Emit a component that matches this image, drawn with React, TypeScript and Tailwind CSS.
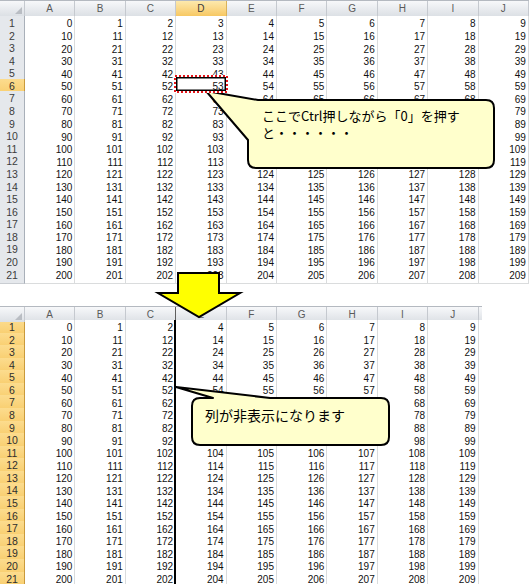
import React from 'react';

const ROWS = Array.from({ length: 21 }, (_, i) => i);
const TOP_COLS = ['A', 'B', 'C', 'D', 'E', 'F', 'G', 'H', 'I', 'J'];
const BOTTOM_COLS: { label: string; off: number | null }[] = [
  { label: 'A', off: 0 },
  { label: 'B', off: 1 },
  { label: 'C', off: 2 },
  { label: 'E', off: 4 },
  { label: 'F', off: 5 },
  { label: 'G', off: 6 },
  { label: 'H', off: 7 },
  { label: 'I', off: 8 },
  { label: 'J', off: 9 },
  { label: '', off: null },
];

const colHead =
  "flex items-center justify-center border-r border-[#c5c9cf] bg-linear-to-b from-[#f7f8fa] to-[#dce0e5] text-[10px] text-[#5a5a5a]";
const colHeadSel =
  "flex items-center justify-center border-r border-[#d9b25a] bg-linear-to-b from-[#fde9ac] to-[#f7c862] text-[10px] text-[#3a3a3a]";
const rowHead =
  "flex items-center justify-center border-r border-b border-r-[#a9b0b9] border-b-[#c9cdd2] bg-[#e5e8ec] text-[10.5px] text-[#3c3c3c]";
const rowHeadSel =
  "flex items-center justify-center border-r border-b border-r-[#c99a3c] border-b-[#eab95a] bg-linear-to-b from-[#fcdc8e] to-[#f8cd6c] text-[10.5px] text-[#2e2e2e]";
const cell =
  "flex items-center justify-end pr-[2px] border-r border-b border-[#dadcdd] bg-white text-[10px] text-[#111]";

function Corner() {
  return (
    <div className="relative border-r border-[#c5c9cf] bg-linear-to-b from-[#f7f8fa] to-[#dce0e5]">
      <div className="absolute right-[2px] bottom-[2px] h-0 w-0 border-l-[7px] border-b-[7px] border-l-transparent border-b-[#b9bdc3]" />
    </div>
  );
}

function Selection() {
  return (
    <svg
      className="pointer-events-none absolute -left-[2px] -top-[4px] z-10"
      width="54"
      height="18"
      viewBox="0 0 54 18"
    >
      <rect x="1" y="1" width="52" height="16" fill="none" stroke="#ffffff" strokeWidth="2" />
      <rect
        x="1"
        y="1"
        width="52"
        height="16"
        fill="none"
        stroke="#e3161b"
        strokeWidth="2"
        strokeDasharray="2 2"
      />
      <rect x="2.75" y="2.75" width="48.5" height="12.5" fill="none" stroke="#000" strokeWidth="1.5" />
    </svg>
  );
}

function TopSheet() {
  return (
    <div className="w-[529px] border-t border-[#b4b9c0] font-['Liberation_Sans',Arial,sans-serif]">
      <div className="grid h-[15px] grid-cols-[25px_repeat(10,50.4px)] border-b border-[#b3b9c1]">
        <Corner />
        {TOP_COLS.map((c) => (
          <div key={c} className={c === 'D' ? colHeadSel : colHead}>
            {c}
          </div>
        ))}
      </div>
      {ROWS.map((r) => (
        <div key={r} className="grid h-[12.58px] grid-cols-[25px_repeat(10,50.4px)]">
          <div className={r === 5 ? rowHeadSel : rowHead}>{r + 1}</div>
          {TOP_COLS.map((c, i) => {
            const hidden = r >= 7 && r <= 11 && i >= 4 && i <= 8;
            return (
              <div key={c} className={cell + ' relative'}>
                <span className={hidden ? 'invisible' : ''}>{r * 10 + i}</span>
                {r === 5 && c === 'D' && <Selection />}
              </div>
            );
          })}
        </div>
      ))}
    </div>
  );
}

function BottomSheet() {
  return (
    <div className="relative mt-[25.8px] w-[482px] overflow-hidden border-t border-[#b4b9c0] font-['Liberation_Sans',Arial,sans-serif]">
      <div className="grid h-[13px] grid-cols-[25px_repeat(10,50.4px)] border-b border-[#b3b9c1]">
        <Corner />
        {BOTTOM_COLS.map((c, i) => (
          <div key={i} className={colHead}>
            {c.label}
          </div>
        ))}
      </div>
      {ROWS.map((r) => (
        <div key={r} className="grid h-[12.58px] grid-cols-[25px_repeat(10,50.4px)]">
          <div className={rowHeadSel}>{r + 1}</div>
          {BOTTOM_COLS.map((c, i) => {
            const hidden = r >= 7 && r <= 9 && i >= 3 && i <= 6;
            return (
              <div key={i} className={cell}>
                <span className={hidden ? 'invisible' : ''}>
                  {c.off === null ? '' : r * 10 + c.off}
                </span>
              </div>
            );
          })}
        </div>
      ))}
      <div className="absolute left-[175px] top-0 h-[13px] w-px bg-[#5e5e5e]" />
      <div className="absolute left-[174px] top-[13px] bottom-0 w-[2px] bg-black" />
    </div>
  );
}

export default function App() {
  return (
    <div className="relative h-[585px] w-[529px] overflow-hidden bg-white">
      <TopSheet />
      <BottomSheet />

      <svg
        className="pointer-events-none absolute left-0 top-0"
        width="529"
        height="585"
        viewBox="0 0 529 585"
      >
        <path
          d="M206 91 L258 100 H486 Q494 100 494 108 V160 Q494 168 486 168 H256 Q248 168 248 160 V140 Z"
          fill="#ffffcc"
          stroke="#000"
          strokeWidth="2"
          strokeLinejoin="round"
        />
        <path
          d="M178 273 H219 V293 H240 L199 317 L158 293 H178 Z"
          fill="#ffff00"
          stroke="#000"
          strokeWidth="2"
        />
        <path
          d="M192 406 Q192 398 200 398 H213 L176 387 L270 398 H381 Q389 398 389 406 V437 Q389 445 381 445 H200 Q192 445 192 437 Z"
          fill="#ffffcc"
          stroke="#000"
          strokeWidth="2"
          strokeLinejoin="round"
        />
      </svg>

      <div className="absolute left-[262px] top-[107px] w-[228px] font-['Noto_Sans_CJK_JP',sans-serif] text-[13px] leading-[17px] text-black">
        <div>ここでCtrl押しながら「0」を押す</div>
        <div>と・・・・・・</div>
      </div>

      <div className="absolute left-[205px] top-[406px] font-['Noto_Sans_CJK_JP',sans-serif] text-[14px] leading-[18px] text-black">
        列が非表示になります
      </div>
    </div>
  );
}
